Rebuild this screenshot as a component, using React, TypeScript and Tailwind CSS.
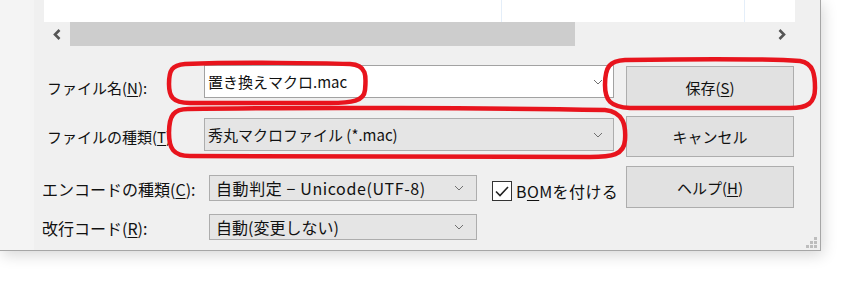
import React from "react"

const Chevron = () => (
  <svg width="10" height="6" viewBox="0 0 10 6" className="shrink-0">
    <path d="M1 1 L5 5 L9 1" fill="none" stroke="#707070" strokeWidth="1" />
  </svg>
)

const U = ({ children }: { children: React.ReactNode }) => (
  <span className="underline underline-offset-2">{children}</span>
)

const App = () => {
  return (
    <div className="relative w-[849px] h-[288px] bg-white overflow-hidden font-['Noto_Sans_CJK_JP',sans-serif] text-[#111]">
      <div className="flex w-[821px] h-[251px] bg-[#f0f0f0] border-r border-b border-[#a6a6a6] shadow-[2px_4px_14px_rgba(0,0,0,0.16)]">
        <div className="w-[34px] h-full bg-[#f4f4f4]" />
        <div className="flex flex-col w-[786px]">
          {/* file list */}
          <div className="ml-[10px] w-[751px] h-[22px] bg-white flex">
            <div className="w-[458px] border-r border-[#e4eef9]" />
            <div className="w-[243px] border-r border-[#e4eef9]" />
          </div>
          {/* horizontal scrollbar */}
          <div className="ml-[10px] w-[751px] h-[24px] flex items-center">
            <div className="w-[26px] flex justify-center">
              <svg width="10" height="11" viewBox="0 0 10 11">
                <path d="M7.5 1 L3 5.5 L7.5 10" fill="none" stroke="#555" strokeWidth="2.6" />
              </svg>
            </div>
            <div className="w-[505px] h-full bg-[#cdcdcd]" />
            <div className="flex-1" />
            <div className="w-[26px] flex justify-center">
              <svg width="10" height="11" viewBox="0 0 10 11">
                <path d="M2.5 1 L7 5.5 L2.5 10" fill="none" stroke="#555" strokeWidth="2.6" />
              </svg>
            </div>
          </div>

          <div className="flex flex-1">
            {/* form */}
            <div className="w-[592px] pt-[19px] flex flex-col">
              <div className="flex items-center h-[33px] pl-[13px] text-[15px]">
                <div className="w-[157px] mt-[12px] leading-none">
                  ファイル名(<U>N</U>):
                </div>
                <div className="w-[410px] h-full bg-white border border-[#a2a2a2] flex items-center justify-between pl-[3px] pr-[10px]">
                  <span className="leading-none">置き換えマクロ.mac</span>
                  <Chevron />
                </div>
              </div>
              <div className="flex items-center h-[33px] mt-[20px] pl-[13px] text-[15px]">
                <div className="w-[157px] mt-[3px] leading-none">
                  ファイルの種類(<U>T</U>)
                </div>
                <div className="w-[410px] h-full bg-[#e5e5e5] border border-[#adadad] flex items-center justify-between pl-[3px] pr-[10px]">
                  <span className="leading-none">秀丸マクロファイル (*.mac)</span>
                  <Chevron />
                </div>
              </div>
              <div className="flex items-center h-[26px] mt-[24px] pl-[8px] text-[16px]">
                <div className="w-[167px] mt-[2px] leading-none">
                  エンコードの種類(<U>C</U>):
                </div>
                <div className="w-[268px] h-full bg-[#e5e5e5] border border-[#adadad] flex items-center justify-between pl-[6px] pr-[12px]">
                  <span className="leading-none tracking-[0.6px]">自動判定 − Unicode(UTF-8)</span>
                  <Chevron />
                </div>
                <div className="ml-[15px] mt-[6px] flex items-center">
                  <div className="w-[20px] h-[20px] bg-white border border-[#333] flex items-center justify-center">
                    <svg width="14" height="11" viewBox="0 0 14 11">
                      <path d="M1 5.5 L5 9.5 L13 1" fill="none" stroke="#222" strokeWidth="1.6" />
                    </svg>
                  </div>
                  <span className="ml-[4px] leading-none tracking-[0.4px]">
                    B<U>O</U>Mを付ける
                  </span>
                </div>
              </div>
              <div className="flex items-center h-[26px] mt-[13px] pl-[8px] text-[16px]">
                <div className="w-[167px] mt-[1px] leading-none">
                  改行コード(<U>R</U>):
                </div>
                <div className="w-[268px] h-full bg-[#e5e5e5] border border-[#adadad] flex items-center justify-between pl-[6px] pr-[12px]">
                  <span className="leading-none">自動(変更しない)</span>
                  <Chevron />
                </div>
              </div>
            </div>

            {/* buttons */}
            <div className="w-[168px] pt-[20px] flex flex-col text-[15px]">
              <button className="h-[42px] bg-[#e1e1e1] border border-[#adadad] leading-none">
                保存(<U>S</U>)
              </button>
              <button className="h-[41px] mt-[8px] bg-[#e1e1e1] border border-[#adadad] leading-none">
                キャンセル
              </button>
              <button className="h-[42px] mt-[9px] bg-[#e1e1e1] border border-[#adadad] leading-none">
                ヘルプ(<U>H</U>)
              </button>
            </div>

            {/* size grip */}
            <div className="flex-1 flex items-end justify-end pr-[3px] pb-[2px]">
              <svg width="11" height="11" viewBox="0 0 11 11">
                <rect x="8" y="0" width="3" height="3" fill="#bdbdbd" />
                <rect x="4" y="4" width="3" height="3" fill="#bdbdbd" />
                <rect x="8" y="4" width="3" height="3" fill="#bdbdbd" />
                <rect x="0" y="8" width="3" height="3" fill="#bdbdbd" />
                <rect x="4" y="8" width="3" height="3" fill="#bdbdbd" />
                <rect x="8" y="8" width="3" height="3" fill="#bdbdbd" />
              </svg>
            </div>
          </div>
        </div>
      </div>

      {/* red hand-drawn marks */}
      <svg className="absolute inset-0 pointer-events-none" width="849" height="288" viewBox="0 0 849 288">
        <g fill="none" stroke="#e8141d" strokeWidth="4.5" strokeLinejoin="round">
          <path d="M185 64 C240 62 320 63 350 64 C368 65 366 78 365 90 C364 101 352 103 330 103 L190 103 C172 103 169 96 169 84 C169 70 172 65 185 64 Z" />
          <path d="M188 109 C300 107 500 108 605 110 C624 112 626 126 625 140 C624 155 612 157 590 157 L190 156 C173 156 169 148 169 133 C169 115 174 109 188 109 Z" />
          <path d="M625 60 C690 59 770 59 800 61 C814 63 815 76 815 88 C815 103 808 108 790 108 L630 108 C610 107 605 100 605 85 C605 66 610 61 625 60 Z" />
        </g>
      </svg>
    </div>
  )
}

export default App
